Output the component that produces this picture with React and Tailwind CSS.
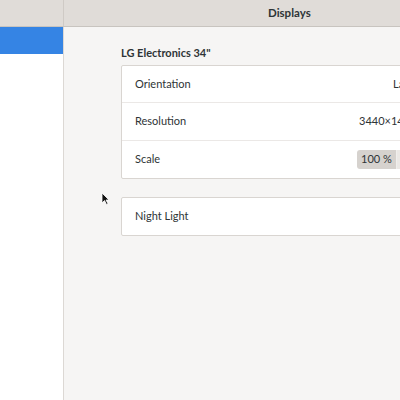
export default function App() {
  return (
    <div className="w-[400px] h-[400px] overflow-hidden flex flex-col bg-[#f6f5f4] text-[#2e3436] font-['Lato',sans-serif] relative">
      <header className="h-[27px] shrink-0 flex bg-[#e0dcd8] border-b border-[#c8c4bf]">
        <div className="w-[64px] border-r border-[#cfcac5]" />
        <div className="flex-1 flex items-center pl-[204px] text-[11.5px] font-bold text-[#2e3436] whitespace-nowrap">
          Displays
        </div>
      </header>
      <div className="flex flex-1 min-h-0">
        <aside className="w-[64px] shrink-0 bg-white border-r border-[#dcd8d4]">
          <div className="h-[27px] bg-[#3584e4]" />
        </aside>
        <main className="flex-1 min-w-0 pl-[57px] pt-[19px]">
          <div className="text-[11px] font-bold leading-[14px] mb-[5px] whitespace-nowrap">LG Electronics 34"</div>
          <div className="w-[340px] bg-white border border-[#d9d5d1] rounded-[2px] text-[11px]">
            <div className="h-[37px] flex items-center pl-[13px] border-b border-[#ebe8e6] whitespace-nowrap">
              <span className="w-[258px] shrink-0">Orientation</span>
              <span>Landscape</span>
            </div>
            <div className="h-[38px] flex items-center pl-[13px] border-b border-[#ebe8e6] whitespace-nowrap">
              <span className="w-[224px] shrink-0">Resolution</span>
              <span>3440×1440 (21∶9)</span>
            </div>
            <div className="h-[37px] flex items-center pl-[13px] whitespace-nowrap">
              <span className="w-[222px] shrink-0">Scale</span>
              <div className="flex shrink-0">
                <div className="w-[40px] h-[19px] flex items-center justify-center bg-[#d6d2ce] rounded-l-[3px] border-r border-[#f0eeec]">100 %</div>
                <div className="w-[40px] h-[19px] flex items-center justify-center bg-[#ebe8e5]">200 %</div>
              </div>
            </div>
          </div>
          <div className="mt-[18px] w-[340px] h-[39px] bg-white border border-[#d9d5d1] rounded-[2px] flex items-center pl-[13px] text-[11px]">
            Night Light
          </div>
        </main>
      </div>
      <svg className="absolute left-[101px] top-[192px]" width="9" height="14" viewBox="0 0 9 14">
        <path d="M1 1 L1 11 L3.5 8.5 L5.5 12.5 L7 11.8 L5 8 L8 8 Z" fill="#111" stroke="#fff" strokeWidth="0.8" />
      </svg>
    </div>
  );
}
